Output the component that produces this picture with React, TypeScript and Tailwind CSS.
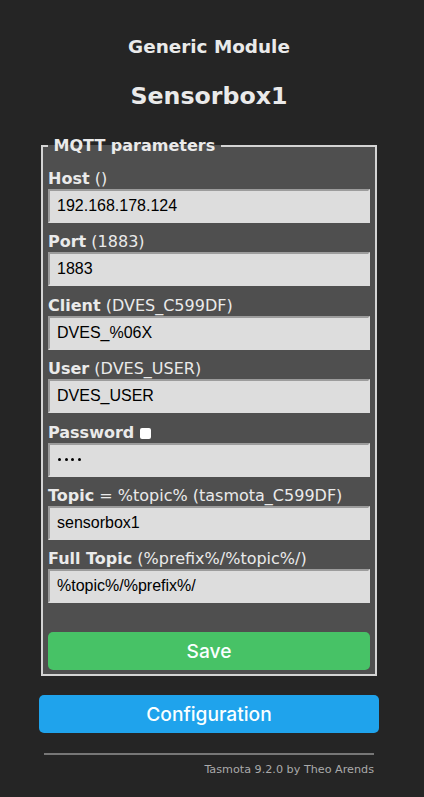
import React from "react";

const labelFont = { fontFamily: '"DejaVu Sans", Verdana, sans-serif' };
const btnFont = { fontFamily: 'Inter, "Liberation Sans", Arial, sans-serif' };

type Field = { name: string; hint: string; value: string; password?: boolean };

const fields: Field[] = [
    { name: "Host", hint: "()", value: "192.168.178.124" },
    { name: "Port", hint: "(1883)", value: "1883" },
    { name: "Client", hint: "(DVES_C599DF)", value: "DVES_%06X" },
    { name: "User", hint: "(DVES_USER)", value: "DVES_USER" },
    { name: "Password", hint: "", value: "****", password: true },
    { name: "Topic", hint: "= %topic% (tasmota_C599DF)", value: "sensorbox1" },
    { name: "Full Topic", hint: "(%prefix%/%topic%/)", value: "%topic%/%prefix%/" },
];

const Row = ({ f }: { f: Field }) => (
    <div className="flex flex-col">
        <div className="text-[16px] leading-[20px] text-[#eaeaea] whitespace-nowrap">
            <b>{f.name}</b> {f.hint}
            {f.password && (
                <span className="ml-[1px] align-[-1px] inline-block w-[11px] h-[11px] rounded-[2px] bg-white" />
            )}
        </div>
        {f.password ? (
            <div className="h-[34px] w-full bg-[#dddddd] border-2 border-t-[#9c9c9c] border-l-[#9c9c9c] border-r-[#dddddd] border-b-[#dddddd] pl-[8px] flex items-center gap-[3.5px]">
                {[0, 1, 2, 3].map((i) => (
                    <span key={i} className="inline-block w-[3px] h-[3px] rounded-full bg-black" />
                ))}
            </div>
        ) : (
            <input
                defaultValue={f.value}
                className="h-[34px] w-full bg-[#dddddd] text-black text-[16px] border-2 border-t-[#9c9c9c] border-l-[#9c9c9c] border-r-[#dddddd] border-b-[#dddddd] pl-[7px] outline-none"
                style={{ fontFamily: '"Liberation Sans", Arial, sans-serif' }}
            />
        )}
    </div>
);

export default function App() {
    return (
        <div className="min-h-[797px] w-full bg-[#252525]" style={labelFont}>
            <div className="w-[340px] ml-[39px] pt-[36px] text-[#eaeaea]">
                {/* titles */}
                <div className="text-center">
                    <div className="text-[18.4px] font-bold leading-[22px]">Generic Module</div>
                    <div className="text-[23.7px] font-bold leading-[28px] mt-[24px]">Sensorbox1</div>
                </div>

                <fieldset className="mt-[24px] mx-[2px] border-2 border-[#d4d4d4] bg-[#4f4f4f] px-[5px] pt-[11px] pb-[4px]">
                    <legend className="text-[16px] font-bold text-[#eaeaea]">&nbsp;MQTT parameters&nbsp;</legend>
                    <div className="flex flex-col gap-[9.4px]">
                        {fields.map((f) => (
                            <Row key={f.name} f={f} />
                        ))}
                    </div>
                    <button
                        className="mt-[29px] w-full h-[38px] rounded-[5px] bg-[#47c266] text-[#faffff] text-[19.2px] font-medium"
                        style={btnFont}
                    >
                        Save
                    </button>
                </fieldset>

                <button
                    className="mt-[19px] w-full h-[38px] rounded-[5px] bg-[#1fa3ec] text-[#faffff] text-[19.2px] font-medium"
                    style={btnFont}
                >
                    Configuration
                </button>

                {/* footer */}
                <div className="px-[5px] mt-[20px] text-right">
                    <div className="h-0 border-t-2 border-[#777777]" />
                    <div className="text-[11.2px] text-[#aaaaaa] mt-[7px]">Tasmota 9.2.0 by Theo Arends</div>
                </div>
            </div>
        </div>
    );
}
